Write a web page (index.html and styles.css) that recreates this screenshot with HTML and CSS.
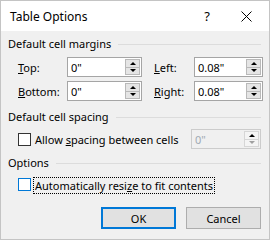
FILE: index.html
```html
<!DOCTYPE html>
<html lang="en">
<head>
  <meta charset="UTF-8">
  <title>Table Options</title>
  <link rel="stylesheet" href="styles.css">
</head>
<body>

  <div class="dialog">
    <div class="titlebar">
      <span class="title">Table Options</span>
      <span class="help">?</span>
      <span class="close">
        <svg width="11" height="11" viewBox="0 0 11 11">
          <path d="M0.5 0.5 L10.5 10.5 M10.5 0.5 L0.5 10.5" stroke="#000" stroke-width="1" fill="none" />
        </svg>
      </span>
    </div>

    <div class="content">
      <div class="group-title">Default cell margins</div>
      <div class="margins">
        <label><u>T</u>op:</label>
        <div class="spin-input">
          <span class="value">0"</span>
          <div class="spinner"><span class="up"></span><span class="down"></span></div>
        </div>
        <label><u>L</u>eft:</label>
        <div class="spin-input">
          <span class="value">0.08"</span>
          <div class="spinner"><span class="up"></span><span class="down"></span></div>
        </div>
        <label><u>B</u>ottom:</label>
        <div class="spin-input">
          <span class="value">0"</span>
          <div class="spinner"><span class="up"></span><span class="down"></span></div>
        </div>
        <label><u>R</u>ight:</label>
        <div class="spin-input">
          <span class="value">0.08"</span>
          <div class="spinner"><span class="up"></span><span class="down"></span></div>
        </div>
      </div>

      <div class="group-title second">Default cell spacing</div>
      <div class="spacing-row">
        <span class="checkbox"></span>
        <span class="check-label">Allow <u>s</u>pacing between cells</span>
        <div class="spin-input disabled">
          <span class="value">0"</span>
          <div class="spinner"><span class="up"></span><span class="down"></span></div>
        </div>
      </div>

      <div class="group-title third">Options</div>
      <div class="options-row">
        <span class="checkbox focused"></span>
        <span class="check-label focus-ring">Automatically resi<u>z</u>e to fit contents</span>
      </div>

      <div class="buttons">
        <button class="default">OK</button>
        <button>Cancel</button>
      </div>
    </div>
  </div>

</body>
</html>
```

FILE: styles.css
```css
body {
  margin: 0;
  font-family: "Noto Sans", "Open Sans", sans-serif;
  font-size: 11px;
  color: #000;
}
.dialog {
  width: 270px;
  height: 240px;
  box-sizing: border-box;
  border: 1px solid #c4c4c4;
  display: flex;
  flex-direction: column;
  background: #f0f0f0;
}
.titlebar {
  height: 30px;
  background: #fff;
  display: flex;
  align-items: center;
  padding-left: 9px;
  font-size: 12px;
}
.title {
  flex: 1;
}
.help {
  width: 20px;
  text-align: center;
  margin-right: 14px;
  font-size: 13px;
}
.close {
  width: 30px;
  display: flex;
  justify-content: center;
  margin-right: 8px;
}
.content {
  flex: 1;
  padding: 5px 8px 0 7px;
}
.group-title {
  display: flex;
  align-items: center;
  height: 16px;
  line-height: 16px;
  white-space: nowrap;
}
.group-title::after {
  content: "";
  flex: 1;
  margin-left: 7px;
  border-top: 1px solid #dcdcdc;
}
.group-title.second {
  margin-top: 8px;
}
.group-title.third {
  margin-top: 6px;
}
.margins {
  margin-top: 5px;
  padding-left: 10px;
  display: grid;
  grid-template-columns: 49px 75px 52px 69px;
  grid-auto-rows: 20px;
  row-gap: 4px;
  align-items: center;
  white-space: nowrap;
}
.margins label:nth-of-type(2n) {
  padding-left: 12px;
}
.spin-input {
  height: 20px;
  box-sizing: border-box;
  border: 1px solid #a5a5a5;
  background: #fff;
  display: flex;
  align-items: center;
  justify-content: space-between;
  padding: 1px 1px 1px 3px;
}
.spinner {
  width: 15px;
  height: 16px;
  display: flex;
  flex-direction: column;
}
.spinner span {
  flex: 1;
  background: #e5e5e5;
  border: 1px solid #b9b9b9;
  display: flex;
  align-items: center;
  justify-content: center;
}
.spinner .up {
  border-bottom: none;
}
.spinner .up::after {
  content: "";
  border-left: 3px solid transparent;
  border-right: 3px solid transparent;
  border-bottom: 3px solid #000;
}
.spinner .down::after {
  content: "";
  border-left: 3px solid transparent;
  border-right: 3px solid transparent;
  border-top: 3px solid #000;
}
.spin-input.disabled {
  background: #f0f0f0;
  border-color: #cccccc;
  color: #a0aab4;
}
.spin-input.disabled .spinner span {
  background: #f4f4f4;
  border-color: #d6d6d6;
}
.spin-input.disabled .spinner .down::after {
  border-top-color: #a0a0a0;
}
.spacing-row {
  margin-top: 4px;
  padding-left: 10px;
  display: flex;
  align-items: center;
  height: 20px;
  white-space: nowrap;
}
.spacing-row .spin-input {
  margin-left: auto;
  width: 70px;
}
.checkbox {
  width: 13px;
  height: 13px;
  flex-shrink: 0;
  box-sizing: border-box;
  border: 1px solid #333;
  background: #fff;
  margin-right: 4px;
}
.checkbox.focused {
  border-color: #0078d7;
}
.options-row {
  margin-top: 7px;
  padding-left: 10px;
  display: flex;
  align-items: flex-start;
  white-space: nowrap;
}
.options-row .checkbox {
  margin-right: 3px;
}
.focus-ring {
  outline: 1px dotted #000;
  padding: 0 1px;
  line-height: 15px;
}
.buttons {
  margin-top: 14px;
  display: flex;
  justify-content: flex-end;
  gap: 10px;
}
button {
  width: 75px;
  height: 22px;
  font-family: inherit;
  font-size: 11px;
  color: #000;
  background: #e1e1e1;
  border: 1px solid #adadad;
  padding: 0;
}
button.default {
  border: 2px solid #0078d7;
}
```
